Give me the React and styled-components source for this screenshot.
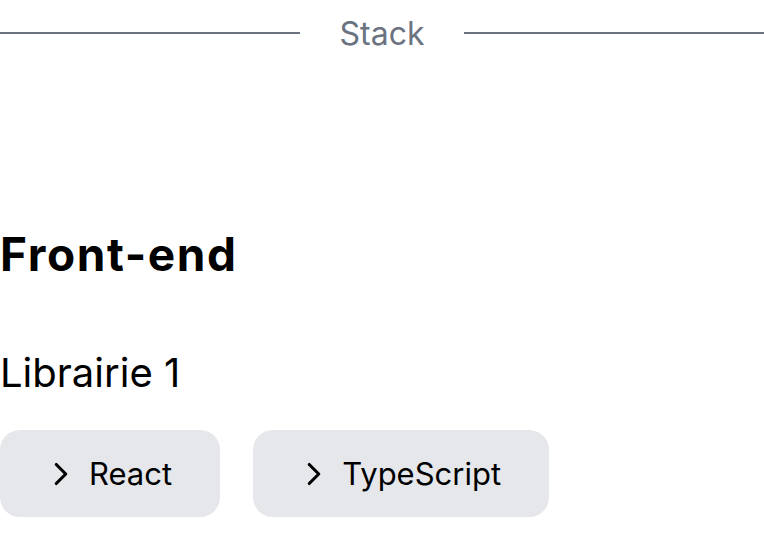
import React from 'react'
import styled, { createGlobalStyle } from 'styled-components'
import { ChevronRight } from 'lucide-react'

const GlobalStyle = createGlobalStyle`
    body {
        margin: 0;
        background: #ffffff;
        font-family: Inter, "Noto Sans", sans-serif;
        color: #000000;
    }
`;

const Page = styled.div`
    width: 764px;
    height: 550px;
    overflow: hidden;
`;

const Divider = styled.div`
    display: flex;
    align-items: center;
    gap: 40px;
    height: 66px;
    color: #6b7280;
    font-size: 32px;

    &::before, &::after {
        content: '';
        flex: 1;
        height: 2px;
        background-color: #6b7280;
    }
`;

const Section = styled.section`
    display: flex;
    flex-direction: column;
    margin-top: 160px;
`;

const Title = styled.h2`
    margin: 0;
    font-size: 46px;
    font-weight: 700;
    line-height: 56px;
    letter-spacing: 1.6px;
`;

const SubTitle = styled.h3`
    margin: 65px 0 0;
    font-size: 40px;
    font-weight: 400;
    line-height: 52px;
`;

const TagRow = styled.div`
    display: flex;
    gap: 33px;
    margin-top: 31px;
`;

const Tag = styled.div`
    display: flex;
    align-items: center;
    gap: 9px;
    height: 87px;
    padding: 0 48px 0 42px;
    border-radius: 20px;
    background-color: #e5e7eb;
    font-size: 31px;
`;

const tags = ['React', 'TypeScript'];

export default function App() {
    return (
        <>
            <GlobalStyle />
            <Page>
                <Divider>Stack</Divider>
                <Section>
                    <Title>Front-end</Title>
                    <SubTitle>Librairie 1</SubTitle>
                    <TagRow>
                        {tags.map((tag) => (
                            <Tag key={tag}>
                                <ChevronRight size={38} strokeWidth={2} />
                                {tag}
                            </Tag>
                        ))}
                    </TagRow>
                </Section>
            </Page>
        </>
    )
}
